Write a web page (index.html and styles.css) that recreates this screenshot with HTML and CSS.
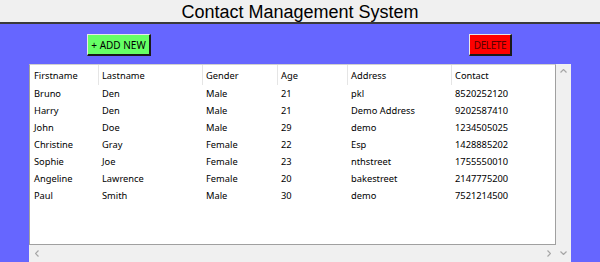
FILE: index.html
```html
<!DOCTYPE html>
<html lang="en">

<head>
  <meta charset="UTF-8">
  <meta name="viewport" content="width=device-width, initial-scale=1.0">
  <title>Contact Management System</title>
  <link rel="stylesheet" href="styles.css">
</head>

<body>
  <div class="titlebar">Contact Management System</div>

  <div class="main">
    <div class="actions">
      <button class="btn btn-add">+ ADD NEW</button>
      <button class="btn btn-delete">DELETE</button>
    </div>

    <div class="table-frame">
      <div class="tree">
        <table>
          <colgroup>
            <col class="c-first">
            <col class="c-last">
            <col class="c-gender">
            <col class="c-age">
            <col class="c-address">
            <col class="c-contact">
          </colgroup>
          <thead>
            <tr>
              <th>Firstname</th>
              <th>Lastname</th>
              <th>Gender</th>
              <th>Age</th>
              <th>Address</th>
              <th>Contact</th>
            </tr>
          </thead>
          <tbody>
            <tr><td>Bruno</td><td>Den</td><td>Male</td><td>21</td><td>pkl</td><td>8520252120</td></tr>
            <tr><td>Harry</td><td>Den</td><td>Male</td><td>21</td><td>Demo Address</td><td>9202587410</td></tr>
            <tr><td>John</td><td>Doe</td><td>Male</td><td>29</td><td>demo</td><td>1234505025</td></tr>
            <tr><td>Christine</td><td>Gray</td><td>Female</td><td>22</td><td>Esp</td><td>1428885202</td></tr>
            <tr><td>Sophie</td><td>Joe</td><td>Female</td><td>23</td><td>nthstreet</td><td>1755550010</td></tr>
            <tr><td>Angeline</td><td>Lawrence</td><td>Female</td><td>20</td><td>bakestreet</td><td>2147775200</td></tr>
            <tr><td>Paul</td><td>Smith</td><td>Male</td><td>30</td><td>demo</td><td>7521214500</td></tr>
          </tbody>
        </table>
      </div>

      <div class="vscroll">
        <svg width="7" height="4" viewBox="0 0 7 4"><path d="M0.5 3.5 L3.5 0.5 L6.5 3.5" /></svg>
        <svg width="7" height="4" viewBox="0 0 7 4"><path d="M0.5 0.5 L3.5 3.5 L6.5 0.5" /></svg>
      </div>

      <div class="hscroll">
        <svg width="4" height="7" viewBox="0 0 4 7"><path d="M3.5 0.5 L0.5 3.5 L3.5 6.5" /></svg>
        <svg width="4" height="7" viewBox="0 0 4 7"><path d="M0.5 0.5 L3.5 3.5 L0.5 6.5" /></svg>
      </div>
    </div>
  </div>
</body>

</html>
```

FILE: styles.css
```css
html,
body {
  height: 100%;
}

body {
  margin: 0;
  display: flex;
  flex-direction: column;
  overflow: hidden;
  font-family: "Noto Sans", sans-serif;
}

.titlebar {
  height: 21px;
  padding-top: 1px;
  line-height: 22px;
  background: #f0f0f0;
  border-bottom: 2px solid #3a3a3a;
  font-family: "Liberation Sans", Arial, sans-serif;
  font-size: 18px;
  text-align: center;
  color: #000;
}

.main {
  flex: 1;
  background: #6666ff;
}

.actions {
  display: flex;
  justify-content: space-between;
  margin-top: 10px;
  padding: 0 88px 0 87px;
}

.btn {
  height: 22px;
  padding: 0;
  font-family: "Noto Sans", sans-serif;
  font-size: 10px;
  border-style: solid;
  border-width: 1px 2px 2px 1px;
  border-color: #e8e8e8 #1a1a1a #1a1a1a #e8e8e8;
  cursor: pointer;
}

.btn-add {
  width: 64px;
  background: #66ff66;
  color: #000;
}

.btn-delete {
  width: 43px;
  background: #ff0000;
  color: #5a0000;
  letter-spacing: -0.4px;
}

.table-frame {
  display: grid;
  grid-template-columns: 527px 15px;
  grid-template-rows: 181px 17px;
  margin: 8px 0 0 29px;
  width: 542px;
}

.tree {
  grid-column: 1;
  grid-row: 1;
  background: white;
  border: 1px solid #a0a0a0;
  border-top-color: #d0d0d0;
  overflow: hidden;
}

table {
  width: 523px;
  border-collapse: collapse;
  table-layout: fixed;
  font-size: 9.3px;
  color: #000;
}

.c-first { width: 68px; }
.c-last { width: 104px; }
.c-gender { width: 75px; }
.c-age { width: 70px; }
.c-address { width: 104px; }
.c-contact { width: 102px; }

th,
td {
  padding: 0 0 0 4px;
  text-align: left;
  font-weight: normal;
  white-space: nowrap;
  overflow: hidden;
}

th {
  height: 20px;
}

th + th {
  box-shadow: inset 1px 0 #e5e5e5;
}

td {
  height: 17px;
}

.vscroll {
  grid-column: 2;
  grid-row: 1 / 3;
  display: flex;
  flex-direction: column;
  justify-content: space-between;
  align-items: center;
  padding: 5px 0 7px;
  background: #f0f0f0;
}

.hscroll {
  grid-column: 1;
  grid-row: 2;
  display: flex;
  justify-content: space-between;
  align-items: center;
  padding: 0 5px 0 6px;
  background: #f0f0f0;
}

.vscroll path,
.hscroll path {
  fill: none;
  stroke: #a6a6a6;
  stroke-width: 1.2;
}
```
